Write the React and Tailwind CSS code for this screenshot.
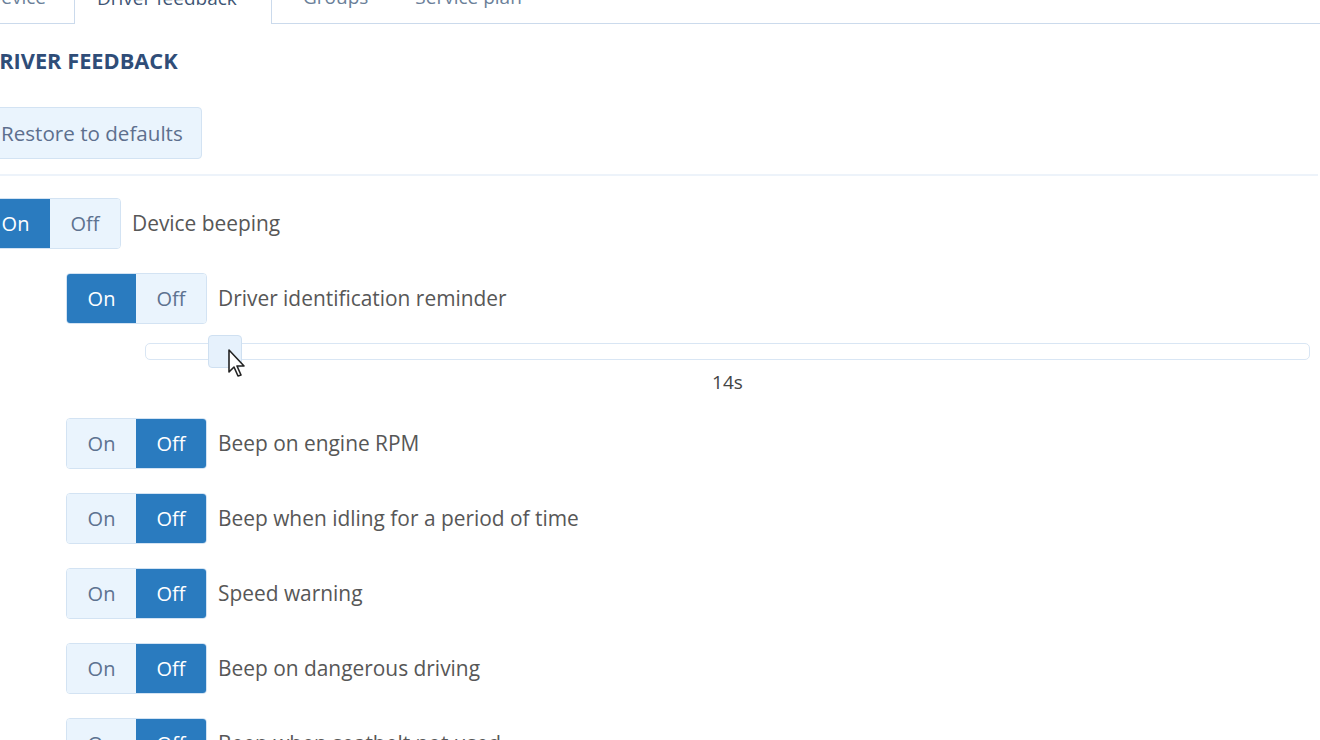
import { useState } from 'react'

const rows = [
  { label: 'Beep on engine RPM', on: false },
  { label: 'Beep when idling for a period of time', on: false },
  { label: 'Speed warning', on: false },
  { label: 'Beep on dangerous driving', on: false },
  { label: 'Beep when seatbelt not used', on: false },
]

function Toggle({ on, onChange }) {
  return (
    <div className="flex h-[51px] shrink-0 rounded-[4px] overflow-hidden border border-[#d3e3f3]">
      <button
        onClick={() => onChange(true)}
        className={
          on
            ? 'w-[69px] bg-[#2a7bbf] text-white text-[20px]'
            : 'w-[69px] bg-[#eaf4fd] text-[#5d7290] text-[20px]'
        }
      >
        On
      </button>
      <button
        onClick={() => onChange(false)}
        className={
          on
            ? 'w-[70px] bg-[#eaf4fd] text-[#5d7290] text-[20px]'
            : 'w-[70px] bg-[#2a7bbf] text-white text-[20px]'
        }
      >
        Off
      </button>
    </div>
  )
}

function Row({ label, on, onChange }) {
  return (
    <div className="flex items-center gap-[11px]">
      <Toggle on={on} onChange={onChange} />
      <span className="text-[20.9px] text-[#575757]">{label}</span>
    </div>
  )
}

function Cursor() {
  return (
    <svg className="absolute left-[228px] top-[349px]" width="20" height="30" viewBox="0 0 20 30">
      <path d="M1 1 L1 23 L6 18 L10 27 L13 26 L9 17 L16 17 Z" fill="#fff" stroke="#222" strokeWidth="1.6" strokeLinejoin="round" />
    </svg>
  )
}

export default function App() {
  const [beeping, setBeeping] = useState(true)
  const [reminder, setReminder] = useState(true)
  const [state, setState] = useState(rows.map((r) => r.on))

  return (
    <div className="relative w-[1320px] h-[740px] overflow-hidden bg-white font-['Open_Sans',sans-serif]">
      {/* Tabs */}
      <div className="flex h-[54px] -mt-[30px] text-[19px] text-[#6b7f99]">
        <div className="w-[95px] -ml-[20px] flex items-end justify-end pr-[28px] pb-[12px] border-r border-b border-[#cbdaec]">
          Device
        </div>
        <div className="w-[196px] flex items-end pl-[22px] pb-[12px] text-[#3f5675]">Driver feedback</div>
        <div className="flex-1 flex items-end gap-[47px] pl-[31px] pb-[12px] border-l border-b border-[#cbdaec]">
          <span>Groups</span>
          <span>Service plan</span>
        </div>
      </div>

      <div className="-ml-[20px] mr-[2px]">
        <h1 className="mt-[23px] pl-[3px] text-[21.8px] font-bold text-[#2f4d78] leading-[28px]">DRIVER FEEDBACK</h1>

        <button className="mt-[32px] h-[52px] w-[222px] pl-[20px] text-left rounded-[4px] border border-[#d3e3f3] bg-[#eaf4fd] text-[20.6px] text-[#5d6f8e]">
          Restore to defaults
        </button>

        <div className="mt-[15px] border-t-2 border-[#edf3fa]" />

        <div className="mt-[22px]">
          <Row label="Device beeping" on={beeping} onChange={setBeeping} />
        </div>

        <div className="pl-[86px] mt-[24px]">
          <Row label="Driver identification reminder" on={reminder} onChange={setReminder} />

          <div className="ml-[79px] mt-[11px] w-[1165px]">
            <div className="relative h-[33px] flex items-center">
              <div className="w-full h-[17px] rounded-[5px] border border-[#d9e6f4] bg-white" />
              <div className="absolute left-[63px] top-0 w-[34px] h-[33px] rounded-[4px] border border-[#cfe0f1] bg-[#e6f1fc]" />
            </div>
            <div className="mt-[2px] text-center text-[19px] text-[#444] leading-[24px]">14s</div>
          </div>

          <div className="mt-[24px] flex flex-col gap-[24px]">
            {rows.map((r, i) => (
              <Row
                key={r.label}
                label={r.label}
                on={state[i]}
                onChange={(v) => setState((s) => s.map((x, j) => (j === i ? v : x)))}
              />
            ))}
          </div>
        </div>
      </div>

      <Cursor />
    </div>
  )
}
